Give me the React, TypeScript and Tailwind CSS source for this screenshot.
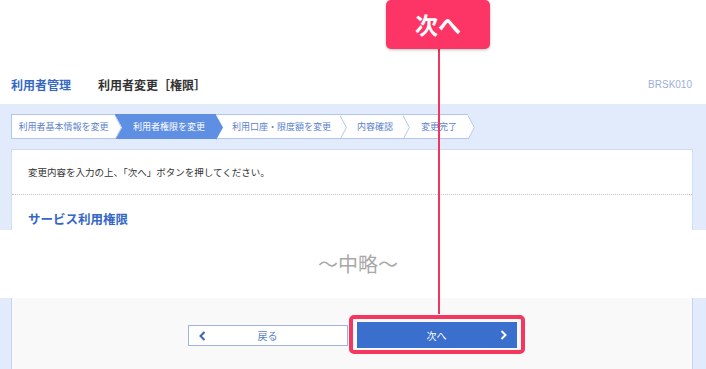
const font = { fontFamily: '"Noto Sans CJK JP", "Noto Sans", sans-serif' };

const steps = [
  { label: '利用者基本情報を変更', w: 'w-[104px]', first: true },
  { label: '利用者権限を変更', w: 'w-[101px]', active: true },
  { label: '利用口座・限度額を変更', w: 'w-[124px]' },
  { label: '内容確認', w: 'w-[63px]' },
  { label: '変更完了', w: 'w-[65px]' },
];

function Arrow({ active }: { active?: boolean }) {
  return (
    <svg className="absolute right-[-7px] top-0 z-10 h-[25px] w-[7px]" viewBox="0 0 7 25">
      {active ? (
        <polygon points="0,0 7,12.5 0,25" fill="#5f8fe3" />
      ) : (
        <>
          <polygon points="0,0 7,12.5 0,25" fill="#ffffff" />
          <polyline points="0,0.5 6.4,12.5 0,24.5" fill="none" stroke="#b3c6ea" strokeWidth="1" />
        </>
      )}
    </svg>
  );
}

function Stepper() {
  return (
    <div className="flex h-[25px]">
      {steps.map(s => (
        <div
          key={s.label}
          className={`relative flex items-center justify-center text-[9px] leading-none ${s.w} ${
            s.active ? 'bg-[#5f8fe3] text-white border-y border-[#5f8fe3]' : 'bg-white text-[#5b7fcc] border-y border-[#b3c6ea]'
          } ${s.first ? 'border-l' : 'pl-[7px]'}`}
        >
          {s.label}
          <Arrow active={s.active} />
        </div>
      ))}
    </div>
  );
}

export default function App() {
  return (
    <div className="relative h-[369px] w-[706px] overflow-hidden bg-white" style={font}>
      {/* page header */}
      <div className="flex h-[104px] items-start px-[11px] pt-[76px] leading-[18px]">
        <span className="text-[12px] font-bold text-[#3568c4]">利用者管理</span>
        <span className="ml-[27px] text-[12px] font-bold text-[#333333]">利用者変更［権限］</span>
        <span className="ml-auto pr-[3px] text-[10px] text-[#9cb0da]" style={{ fontFamily: '"Liberation Sans", sans-serif' }}>BRSK010</span>
      </div>

      {/* upper blue area */}
      <div className="bg-[#e2ebfb] pl-[11px] pr-[13px] pt-[10px]">
        <Stepper />
        <div className="mt-[10px] border-x border-t border-[#d3ddf0] bg-white">
          <div className="flex h-[44px] items-center px-[16px] text-[9.5px] text-[#333333]">
            変更内容を入力の上、「次へ」ボタンを押してください。
          </div>
          <div className="border-t border-dotted border-[#c4c4c4]" />
          <div className="h-[35px] px-[16px] pt-[15px] text-[12.5px] font-bold leading-[18px] text-[#3566c6]">
            サービス利用権限
          </div>
        </div>
      </div>

      {/* omission band */}
      <div className="flex h-[68px] items-center justify-center bg-white pl-[10px] text-[20px] text-[#a8a8a8]">
        ～中略～
      </div>

      {/* lower blue area */}
      <div className="h-[72px] bg-[#e2ebfb] pl-[11px] pr-[13px]">
        <div className="flex h-full justify-center gap-[9px] border-x border-[#c9d5ee] bg-[#f9f9f9] pt-[24px]">
          <button className="relative mt-[3px] flex h-[21px] w-[160px] items-center justify-center border border-[#9fb4e3] bg-white text-[10px] text-[#5b7fcc]">
            <svg className="absolute left-[10px] top-[5px] h-[10px] w-[7px]" viewBox="0 0 7 10">
              <polyline points="5.5,1 1.5,5 5.5,9" fill="none" stroke="#3d63b8" strokeWidth="2" />
            </svg>
            戻る
          </button>
          <div className="relative h-[26px]">
            <button className="relative flex h-[26px] w-[160px] items-center justify-center bg-[#3b6fcd] text-[10px] text-white">
              次へ
              <svg className="absolute right-[10px] top-[8px] h-[10px] w-[7px]" viewBox="0 0 7 10">
                <polyline points="1.5,1 5.5,5 1.5,9" fill="none" stroke="#ffffff" strokeWidth="2" />
              </svg>
            </button>
            <div className="absolute -left-[8px] -right-[8px] -top-[7px] -bottom-[6px] rounded-[5px] border-4 border-[#f5365f]" />
          </div>
        </div>
      </div>

      {/* annotation callout */}
      <div className="absolute left-[438px] top-[48px] h-[266px] w-[2px] bg-[#f0355f]" />
      <div className="absolute left-[386px] top-0 flex h-[49px] w-[104px] items-center justify-center rounded-[5px] bg-[#fd3567] text-[23px] font-bold text-white shadow-[0_1px_3px_rgba(0,0,0,0.25)]">
        次へ
      </div>
    </div>
  );
}
